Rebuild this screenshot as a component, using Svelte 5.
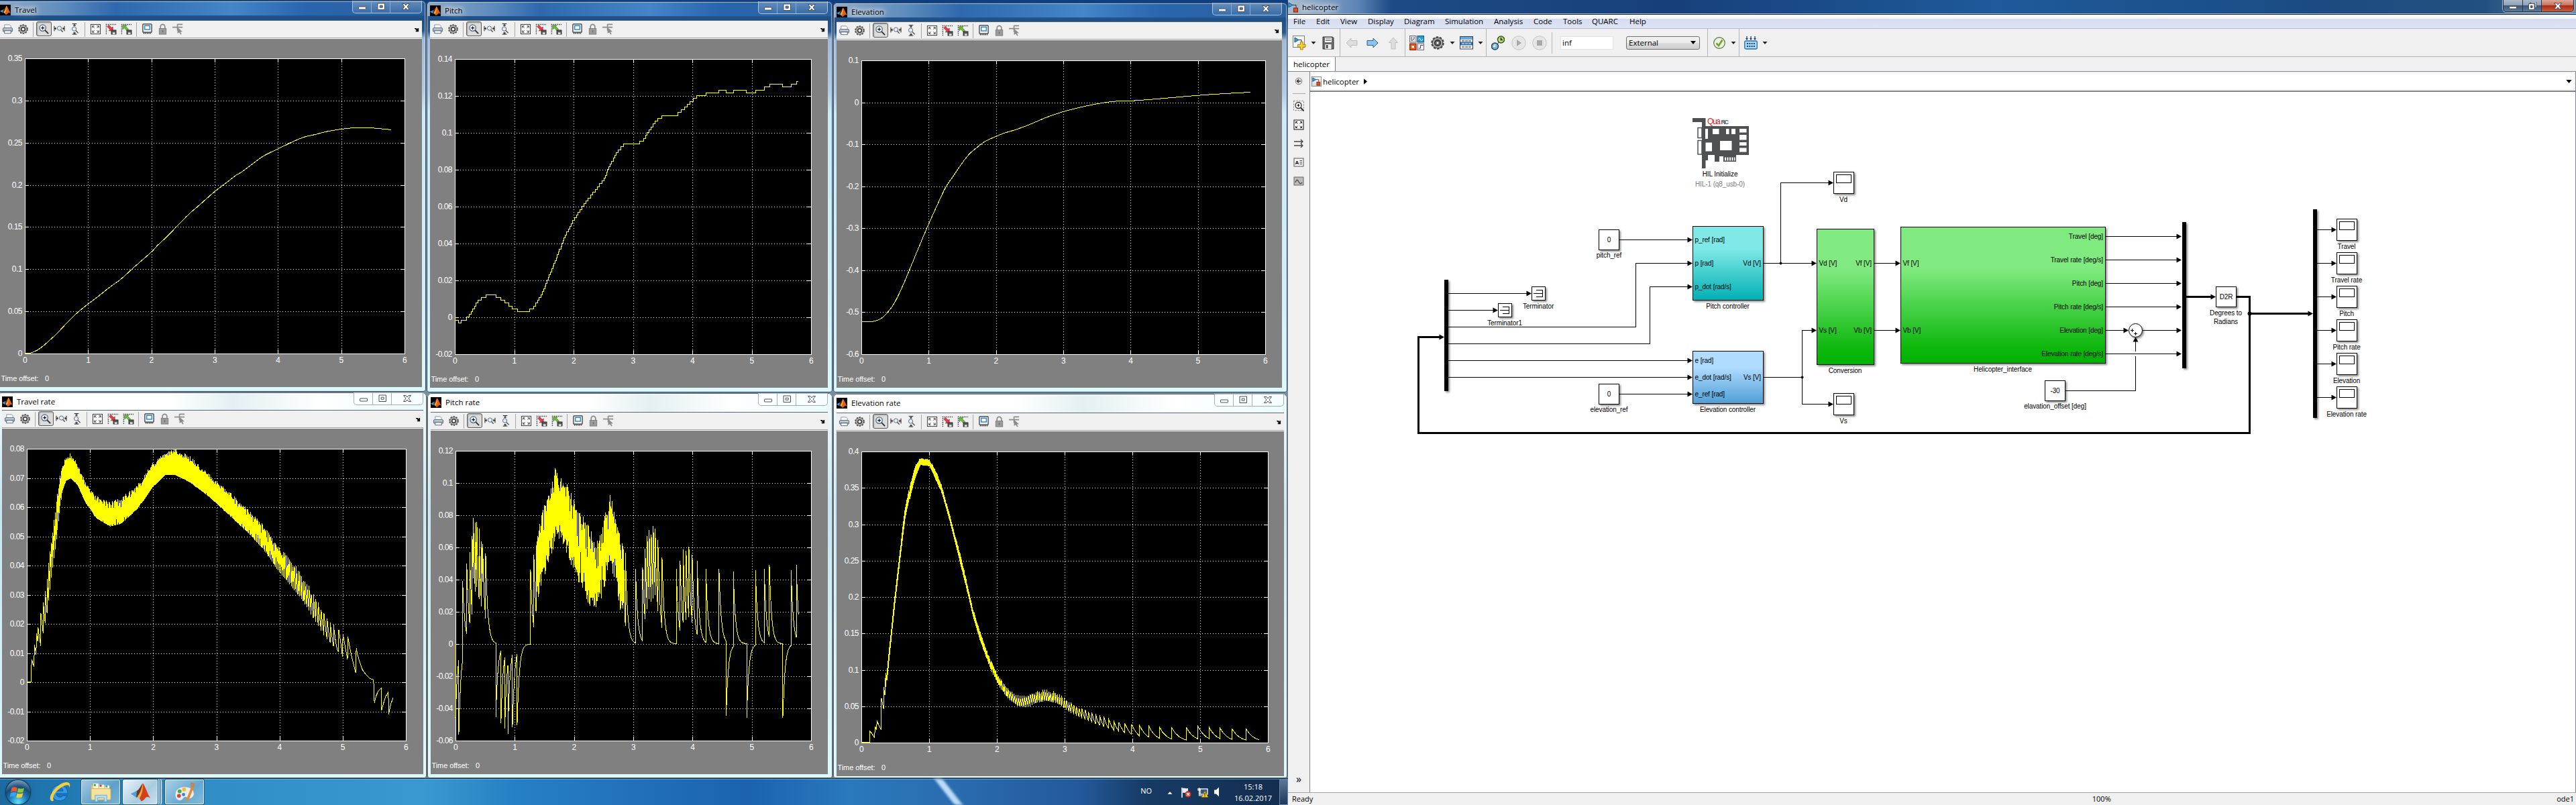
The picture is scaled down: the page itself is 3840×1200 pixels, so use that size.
<script>
  // ---------- helpers ----------
  function rng(seed) {
    let s = seed;
    return () => {
      s = (s * 16807) % 2147483647;
      return s / 2147483647;
    };
  }
  function lerpAt(knots, x, k) {
    if (x <= knots[0][0]) return knots[0][k];
    for (let i = 1; i < knots.length; i++) {
      if (x <= knots[i][0]) {
        const a = knots[i - 1];
        const b = knots[i];
        return a[k] + ((b[k] - a[k]) * (x - a[0])) / (b[0] - a[0]);
      }
    }
    return knots[knots.length - 1][k];
  }
  function catmull(pts) {
    const out = [];
    for (let i = 0; i < pts.length - 1; i++) {
      const p0 = pts[Math.max(0, i - 1)];
      const p1 = pts[i];
      const p2 = pts[i + 1];
      const p3 = pts[Math.min(pts.length - 1, i + 2)];
      for (let j = 0; j < 8; j++) {
        const t = j / 8;
        const f = (a, b, c, d) =>
          0.5 * (2 * b + (c - a) * t + (2 * a - 5 * b + 4 * c - d) * t * t + (3 * b - a - 3 * c + d) * t * t * t);
        out.push([f(p0[0], p1[0], p2[0], p3[0]), f(p0[1], p1[1], p2[1], p3[1])]);
      }
    }
    out.push(pts[pts.length - 1]);
    return out;
  }
  // quantised staircase between sample knots
  function stairs(knots, base, step) {
    const out = [];
    let last = null;
    const end = knots[knots.length - 1][0];
    for (let x = knots[0][0]; x <= end; x += 1) {
      const y = base - Math.round((base - lerpAt(knots, x, 1)) / step) * step;
      if (last !== null && y !== last) out.push([x, last]);
      if (y !== last) out.push([x, y]);
      last = y;
    }
    out.push([end, last]);
    return out;
  }
  // sawtooth: the value decays to zero level and jumps back to the upper envelope [x, top, jump]
  function saw(env, zero, tau, minStep, seed) {
    const r = rng(seed);
    const out = [];
    let x = env[0][0];
    const end = env[env.length - 1][0];
    while (x < end) {
      const jit = (r() - 0.5) * 0.22;
      const jump = lerpAt(env, x, 2);
      const hi = lerpAt(env, x, 1) - jit * jump;
      const lo = hi + jump * (1 + jit);
      const ratio = Math.max(0.02, (zero - lo) / (zero - hi));
      const dx = Math.max(minStep, -tau * Math.log(ratio));
      out.push([x, hi]);
      const n = dx > 10 ? 4 : 1;
      for (let i = 1; i <= n; i++) {
        const xx = x + (dx * i) / n;
        out.push([xx, n > 1 ? zero - (zero - hi) * Math.exp((-dx * i) / n / tau) : lo]);
      }
      x += dx;
    }
    return out;
  }
  // isolated pulses [x, peak] decaying towards zero level
  function pulses(list, zero, tau, end, start = zero) {
    const out = [];
    list.forEach(([x, peak], i) => {
      if (i === 0) out.push([x, start]);
      out.push([x, peak]);
      const nx = i + 1 < list.length ? list[i + 1][0] : end;
      const n = Math.max(2, Math.ceil((nx - x) / 4));
      for (let j = 1; j <= n; j++) {
        const d = ((nx - x) * j) / n;
        out.push([x + d, zero + (peak - zero) * Math.exp(-d / tau)]);
      }
    });
    return out;
  }

  // ---------- traces ----------
  const travel = catmull([[90,1378],[110,1376],[135,1365],[155,1350],[180,1327],[210,1297],[250,1252],[285,1216],[319,1187],[355,1158],[400,1120],[440,1089],[490,1041],[552,983],[575,957],[610,922],[650,878],[690,835],[735,793],[783,748],[830,710],[860,685],[885,669],[925,637],[965,607],[1015,581],[1065,555],[1110,535],[1150,525],[1195,513],[1246,504],[1290,499],[1330,498],[1370,500],[1428,506]]);
  const elevation = catmull([[122,1255],[147,1254],[170,1251],[190,1240],[210,1217],[233,1180],[258,1120],[280,1060],[310,975],[346,876],[385,775],[405,728],[430,685],[455,642],[480,604],[505,578],[535,552],[570,533],[600,519],[640,505],[690,483],[740,458],[796,436],[860,417],[920,403],[965,396],[1020,394],[1100,387],[1200,377],[1300,368],[1421,360]]);
  const pitch = stairs([[141,1237],[143,1246],[152,1253],[160,1257],[170,1250],[190,1238],[205,1213],[222,1180],[240,1161],[265,1148],[285,1150],[305,1162],[330,1182],[357,1203],[380,1214],[408,1213],[425,1204],[445,1172],[465,1132],[490,1065],[515,998],[545,918],[574,862],[605,808],[635,768],[655,742],[685,700],[710,640],[735,592],[760,564],[795,563],[825,553],[850,512],[875,474],[900,454],[945,453],[975,428],[1005,395],[1030,375],[1055,374],[1060,364],[1103,364],[1107,354],[1130,354],[1132,364],[1155,364],[1158,354],[1205,354],[1208,364],[1236,364],[1240,354],[1269,353],[1273,343],[1288,343],[1292,333],[1337,333],[1340,343],[1367,343],[1370,333],[1387,333],[1389,320],[1396,320]], 1237, 11.07);

  const travelRate = [
    [99,1113],[114,1113],[117,1029],[125,1056],[127,975],[133,1010],[134,932],[139,962],
    ...saw([[140,900,80],[165,780,85],[200,510,100],[225,325,80],[240,285,80],[258,272,85],[280,300,80],[310,370,75],[350,430,75],[400,450,85],[440,440,85],[500,390,80],[560,305,80],[600,270,75],[640,255,90],[690,280,90],[750,335,80],[800,380,80],[900,470,85],[960,535,85],[1010,605,90],[1100,715,95],[1180,850,100],[1225,905,92]], 1113, 24, 2.5, 77),
    [1237,1002],[1238,920],[1245,965],[1252,1018],[1253,935],[1261,980],[1270,1028],[1271,945],[1283,1010],
    [1300,1078],[1302,986],[1306,1008],[1315,1040],[1325,1068],[1340,1088],[1352,1100],[1365,1104],
    [1366,1130],[1368,1189],[1374,1165],[1382,1147],[1393,1135],[1394,1218],[1402,1190],[1410,1165],[1419,1150],[1420,1233],[1428,1195],[1436,1172]
  ];

  const denseTop = [[440,606,800],[447,535,805],[470,445,730],[495,388,650],[506,340,610],[512,290,590],[517,325,590],[525,350,600],[540,345,615],[560,380,650],[575,432,700],[600,475,760],[630,520,820],[655,590,865],[680,525,810],[700,455,720],[712,418,690],[730,480,740],[750,580,860]];
  function denseBand(seed) {
    const r = rng(seed);
    const out = [];
    for (let x = 440; x < 762; ) {
      out.push([x, lerpAt(denseTop, x, 1) + r() * 45]);
      x += 2.3 + r() * (x > 570 && x < 690 ? 3 : 1.6);
      out.push([x, lerpAt(denseTop, x, 2) - r() * 60]);
    }
    return out;
  }
  const pitchRate = [
    ...pulses([[146,1245],[158,1308]], 971, 8, 172),
    ...pulses([[172,738],[187,672],[198,632],[207,570],[211,504],[218,522],[224,518],[232,545],[241,592],[245,600],[256,635]], 971, 8, 293, 1010),
    ...pulses([[293,1243],[312,1265],[326,1285],[337,1306],[354,1280],[371,1273]], 971, 8, 420),
    ...pulses([[420,695],[432,640]], 971, 8, 440),
    ...denseBand(31),
    ...pulses([[766,633],[803,692],[829,688],[838,618],[846,572],[853,548],[861,565],[868,535],[875,543],[885,585],[900,650],[952,694],[966,662],[977,620],[988,626],[998,612],[1010,640],[1028,662],[1060,692],[1108,694],[1134,1238],[1160,704],[1209,1246],[1241,697],[1273,692],[1292,677],[1341,1246],[1371,699],[1390,677]], 971, 8, 1398, 905)
  ];

  const elevationRate = [
    [120,1336],[147,1336],[148,1295],[155,1303],[164,1318],[166,1278],[171,1290],
    ...saw([[172,1250,40],[183,1200,40],[205,1060,25],[230,800,25],[250,615,25],[265,475,30],[285,365,38],[298,315,38],[315,283,24],[345,287,24],[360,310,34],[385,375,34],[415,490,34],[450,640,38],[490,830,38],[520,940,38],[550,1030,40],[580,1095,42],[610,1140,42],[640,1162,40],[670,1168,38],[700,1150,38],[735,1142,40],[770,1152,40],[800,1177,42],[850,1210,40],[900,1230,42],[950,1250,42],[1000,1265,42],[1050,1275,42],[1100,1281,42],[1160,1286,42],[1230,1277,44],[1280,1280,42],[1350,1284,44],[1410,1285,42],[1420,1290,30]], 1336, 26, 2.3, 911)
  ];

  function fit(pts, box, w, h) {
    const [x0, y0, x1, y1] = box;
    return pts.map(([x, y]) => `${(((x - x0) / (x1 - x0)) * w).toFixed(1)},${(((y - y0) / (y1 - y0)) * h).toFixed(1)}`).join(' ');
  }

  // window frame: x, y, w, h; insets: l, r, t, b; axes: plot box relative to the body
  const scopes = [
    { title: 'Travel', x: -7, y: 1, w: 642, h: 583, l: 7, r: 6, t: 29, b: 7, ax: 37, ay: 29, aw: 566, ah: 440, labels: ['0.35','0.3','0.25','0.2','0.15','0.1','0.05','0'], pts: travel, box: [90,228,1478,1378], active: true },
    { title: 'Pitch', x: 636, y: 2, w: 605, h: 583, l: 5, r: 7, t: 28, b: 7, ax: 37, ay: 30, aw: 531, ah: 440, labels: ['0.14','0.12','0.1','0.08','0.06','0.04','0.02','0','-0.02'], pts: pitch, box: [141,231,1442,1381], active: true },
    { title: 'Elevation', x: 1242, y: 4, w: 677, h: 581, l: 5, r: 8, t: 28, b: 7, ax: 37, ay: 30, aw: 602, ah: 438, labels: ['0.1','0','-0.1','-0.2','-0.3','-0.4','-0.5','-0.6'], pts: elevation, box: [122,236,1470,1381], active: true },
    { title: 'Travel rate', x: -4, y: 585, w: 640, h: 575, l: 7, r: 5, t: 26, b: 6, ax: 37, ay: 30, aw: 565, ah: 435, labels: ['0.08','0.07','0.06','0.05','0.04','0.03','0.02','0.01','0','-0.01','-0.02'], pts: travelRate, box: [99,247,1483,1330] },
    { title: 'Pitch rate', x: 637, y: 586, w: 604, h: 574, l: 5, r: 7, t: 28, b: 6, ax: 37, ay: 30, aw: 530, ah: 432, labels: ['0.12','0.1','0.08','0.06','0.04','0.02','0','-0.02','-0.04','-0.06'], pts: pitchRate, box: [146,255,1444,1330] },
    { title: 'Elevation rate', x: 1242, y: 587, w: 677, h: 573, l: 5, r: 5, t: 28, b: 3, ax: 37, ay: 30, aw: 606, ah: 434, labels: ['0.4','0.35','0.3','0.25','0.2','0.15','0.1','0.05','0'], pts: elevationRate, box: [120,257,1477,1337] }
  ];
  const scopeTools = ['print', 'gear', '|', 'zoom', 'zoomx', 'zoomy', '|', 'fit', 'save', 'restore', '|', 'float', 'lock', 'select'];

  const menus = [['File', 34], ['Edit', 36], ['View', 41], ['Display', 54], ['Diagram', 61], ['Simulation', 73], ['Analysis', 59], ['Code', 44], ['Tools', 43], ['QUARC', 56], ['Help', 30]];

  // [kind, width, gap before]
  const tools = [['new',20,7],['caret',8,7],['disk',18,9],['sep',1,8],['left',18,8],['right',18,13],['up',18,13],['sep',1,8],['lib',22,6],['cog',20,10],['caret',8,8],['table',20,7],['caret',8,7],['sep',1,4],['clocks',20,7],['play',22,10],['stop',22,9],['short',1,7],['field',79,12],['combo',110,19],['sep',1,11],['check',18,8],['caret',8,8],['sep',1,4],['build',20,7],['caret',8,7]];

  // ---------- diagram ----------
  const blocks = [
    { x: 2523.5, y: 337.5, w: 105, h: 110, fill: 'url(#teal)', name: 'Pitch controller', ins: [['p_ref [rad]', 357], ['p [rad]', 392], ['p_dot [rad/s]', 427]], outs: [['Vd [V]', 392]] },
    { x: 2523.5, y: 523.5, w: 105, h: 78, fill: 'url(#sky)', name: 'Elevation controller', ins: [['e [rad]', 537], ['e_dot [rad/s]', 562], ['e_ref [rad]', 587]], outs: [['Vs [V]', 562]] },
    { x: 2708.5, y: 341.5, w: 85, h: 202, fill: 'url(#green)', name: 'Conversion', ins: [['Vd [V]', 392], ['Vs [V]', 492]], outs: [['Vf [V]', 392], ['Vb [V]', 492]] },
    { x: 2833.5, y: 338.5, w: 305, h: 203, fill: 'url(#green)', name: 'Helicopter_interface', ins: [['Vf [V]', 392], ['Vb [V]', 492]], outs: [['Travel [deg]', 352], ['Travel rate [deg/s]', 387], ['Pitch [deg]', 422], ['Pitch rate [deg/s]', 457], ['Elevation [deg]', 492], ['Elevation rate [deg/s]', 527]] }
  ];
  const consts = [
    { x: 2383.5, y: 342.5, v: '0', name: 'pitch_ref' },
    { x: 2383.5, y: 572.5, v: '0', name: 'elevation_ref' },
    { x: 3048.5, y: 567.5, v: '-30', name: 'elavation_offset [deg]' },
    { x: 3303.5, y: 427.5, v: 'D2R', name: '' }
  ];
  const sinks = [
    { x: 2733.5, y: 256.5, name: 'Vd' },
    { x: 2733.5, y: 586.5, name: 'Vs' },
    ...['Travel', 'Travel rate', 'Pitch', 'Pitch rate', 'Elevation', 'Elevation rate'].map((name, i) => ({ x: 3483.5, y: 326.5 + 50 * i, name }))
  ];
  const wires = [
    'M2159 437.5H2276', 'M2159 462.5H2226', 'M2159 487.5H2438.5V392.5H2516', 'M2159 512.5H2459.5V427.5H2516',
    'M2159 537.5H2516', 'M2159 562.5H2516', 'M2414 587.5H2516', 'M2414 357.5H2516',
    'M2629 392.5H2701', 'M2654.5 392.5V272.5H2726', 'M2629 562.5H2686.5', 'M2701 492.5H2686.5V602.5H2726',
    'M2794 392.5H2826', 'M2794 492.5H2826', 'M3139 492.5H3166', 'M3194 492.5H3245', 'M3079 582.5H3183.5V531',
    'M3183.5 524V509', ...[352.5, 387.5, 422.5, 457.5, 527.5].map((y) => `M3139 ${y}H3245`),
    ...[0, 1, 2, 3, 4, 5].map((i) => `M3454 ${342.5 + i * 50}H3476`)
  ];
  const heads = [[2283,437.5],[2233,462.5],[2523,392.5],[2523,427.5],[2523,537.5],[2523,562.5],[2523,587.5],[2523,357.5],[2708,392.5],[2733,272.5],[2708,492.5],[2733,602.5],[2833,392.5],[2833,492.5],[3173,492.5],[3252,492.5],[3252,352.5],[3252,387.5],[3252,422.5],[3252,457.5],[3252,527.5],[2153,502.5],[3303,442.5],[3448,467.5],...[0,1,2,3,4,5].map((i) => [3483, 342.5 + i * 50])];
</script>

{#snippet matlab()}
  <svg class="mlogo" viewBox="0 0 16 16"><path d="M0 9.5 5 7l2.5 2.5L4 12z" fill="#3f9ad0" /><path d="M5 7c2-.5 3-4 4.8-5.4L8 11l-4 1z" fill="#5b2c20" /><path d="M9.8 1.6c2 2.5 3.6 7.500 6.200 11-2-1.400-3.500-1-4.500.400-1 1.300-2 2-3 2C7.500 13 6.500 12 5.500 11.200 8 9 8.500 3 9.800 1.600z" fill="#e2601c" /><path d="M9.800 1.600C8.700 4 8.500 8 5.500 11.200l1.500 2C9.500 10 10 5 9.800 1.600z" fill="#f6b13c" /></svg>
{/snippet}

{#snippet simlogo()}
  <svg class="sim" viewBox="0 0 16 16"><path d="M1 1v7l6-3.500z" fill="#35a3dc" stroke="#14557f" /><path d="M7 4.500h5V9" fill="none" stroke="#333" /><rect x="8.500" y="9" width="6" height="6" fill="#e2501c" stroke="#7d2410" /></svg>
{/snippet}

{#snippet winButtons(active)}
  <div class="wbtns" class:active>
    <span class="wb"><svg viewBox="0 0 14 12"><rect x="1.500" y="6" width="11" height="4" rx=".5" /></svg></span>
    <span class="wb"><svg viewBox="0 0 14 12"><path fill-rule="evenodd" d="M2 1h10.500v9.500H2zM5.200 4.200v3h4v-3z" /></svg></span>
    <span class="wb close"><svg viewBox="0 0 14 12"><path d="M1.500 1.500h3.500L7 4l2-2.500h3.500L9 6l3.500 4.500H9L7 8l-2 2.500H1.500L5 6z" /></svg></span>
  </div>
{/snippet}

{#snippet scopeIcon(k)}
  <svg class="ic" viewBox="0 0 18 18">
    {#if k === 'print'}
      <path d="M4 7V2h8l2 2v3" fill="#f8fafc" stroke="#8794a3" /><rect x="1.500" y="7" width="15" height="6" rx="1.500" fill="#9aa9ba" stroke="#5a6878" /><rect x="2.500" y="8" width="13" height="1.500" fill="#cfd8e2" /><rect x="4" y="11.500" width="10" height="4" fill="#fff" stroke="#5a6878" />
    {:else if k === 'gear'}
      <circle cx="9" cy="9" r="6.800" fill="none" stroke="#555" stroke-width="2" stroke-dasharray="2.600 1.700" /><circle cx="9" cy="9" r="6" fill="#bdbdbd" stroke="#555" /><circle cx="9" cy="9" r="3" fill="#f2f2f2" stroke="#333" stroke-width="1.600" />
    {:else if k === 'zoom'}
      <circle cx="7" cy="7" r="5" fill="#e4eef8" stroke="#5d6570" stroke-width="1.300" /><path d="M10.500 10.500 16 16" stroke="#333" stroke-width="2" /><path d="M4.500 7h5M7 4.500v5" stroke="#111" stroke-width="1.200" />
    {:else if k === 'zoomx'}
      <circle cx="9" cy="7.500" r="3.300" fill="#e4eef8" stroke="#5d6570" /><path d="M11.300 10 14.500 13.500" stroke="#555" stroke-width="1.500" /><path d="M1 4v8M17 4v8M1 8h3M14 8h3M3 6v4M15 6v4" stroke="#111" />
    {:else if k === 'zoomy'}
      <circle cx="8" cy="8.500" r="3.300" fill="#e4eef8" stroke="#5d6570" /><path d="M10.500 11 14.500 15" stroke="#555" stroke-width="1.500" /><path d="M5 .5h7M5 17h7M8.500 1v3.500M8.500 13.500V17M6.500 3h4M6.500 15h4" stroke="#111" />
    {:else if k === 'fit'}
      <rect x="1.500" y="1.500" width="15" height="15" fill="#fff" stroke="#333" /><path d="M4 7V4h3M11 4h3v3M14 11v3h-3M7 14H4v-3M4 4l3 3M14 4l-3 3M14 14l-3-3M4 14l3-3" fill="none" stroke="#333" />
    {:else if k === 'save' || k === 'restore'}
      <path d="M1.500 17V1.500H17" fill="none" stroke="#333" stroke-width="1.500" stroke-dasharray="1.500 1.500" />
      {#if k === 'save'}
        <path d="M3 5l2.500-2.500 4.500 4.500 1.800-1.700v6.200H5.500L7.500 9.500z" fill="#ee3b45" stroke="#8d1a20" stroke-width=".7" />
      {:else}
        <path d="M3 3h6.500L7.800 4.700l4.500 4.500L10 11.500 5.500 7 3 9.300z" fill="#6cc038" stroke="#2f6a14" stroke-width=".7" />
      {/if}
      <rect x="9.500" y="10.500" width="7.500" height="6.500" fill="#555" stroke="#222" stroke-width=".8" /><rect x="11.500" y="14" width="4" height="3" fill="#ddd" />
    {:else if k === 'float'}
      <rect x="2" y="1" width="14" height="13" rx="1" fill="#f2f2f2" stroke="#333" stroke-width="1.300" /><rect x="5" y="3.500" width="8" height="6" fill="#fff" stroke="#1c7fd0" stroke-width="1.400" /><path d="M3 15.500h12" stroke="#333" stroke-width="2" stroke-dasharray="1.500 1.200" />
    {:else if k === 'lock'}
      <path d="M5.500 8V5a3.500 3.500 0 0 1 7 0v3" fill="none" stroke="#8a8a8a" stroke-width="1.800" /><rect x="3.500" y="8" width="11" height="9" fill="#9c9c9c" stroke="#7d7d7d" /><rect x="8.300" y="11" width="1.500" height="3" fill="#666" />
    {:else}
      <path d="M0 6h8M8 1v10M8 1.500h8M8 6h8" stroke="#8c8c8c" stroke-width="1.700" fill="none" /><path d="M8 6l8 7-3.500.3 2 3.500-1.700.8-2-3.500L8 16z" fill="#8c8c8c" />
    {/if}
  </svg>
{/snippet}

{#snippet toolIcon(k)}
  {#if k === 'new'}
    <svg viewBox="0 0 20 22"><rect x=".5" y=".5" width="17" height="17" fill="#f4f6f8" stroke="#77808a" /><path d="M3 3v7l6-3.500z" fill="#35a3dc" stroke="#14557f" /><path d="M9 6.500h4V10" fill="none" stroke="#333" /><path d="M12 10h4v4h4v4h-4v4h-4v-4H8v-4h4z" transform="scale(.95)" fill="#f7cf3c" stroke="#a57a0c" /></svg>
  {:else if k === 'caret'}
    <svg viewBox="0 0 8 22"><path d="M.5 9h7L4 13z" fill="#222" /></svg>
  {:else if k === 'disk'}
    <svg viewBox="0 0 18 22"><path d="M1 2h14.500L17 3.500V20H1z" fill="#6b6b6b" stroke="#333" /><rect x="4" y="3" width="10" height="7" fill="#fff" /><path d="M5 5h8M5 7.500h8" stroke="#555" /><rect x="4.500" y="13" width="9" height="7" fill="#eee" /><rect x="6" y="14" width="2.500" height="5" fill="#444" /></svg>
  {:else if k === 'left'}
    <svg viewBox="0 0 18 22"><path d="M1 11 8 4v3.500h9v7H8V18z" fill="#ddd" stroke="#bdbdbd" /></svg>
  {:else if k === 'right'}
    <svg viewBox="0 0 18 22"><path d="M17 11 10 4v3.500H1v7h9V18z" fill="#8fc4ee" stroke="#2d5f8a" /></svg>
  {:else if k === 'up'}
    <svg viewBox="0 0 18 22"><path d="M9 3 2.500 10.500h3.500V20h6v-9.500h3.500z" fill="#ddd" stroke="#bdbdbd" /></svg>
  {:else if k === 'lib'}
    <svg viewBox="0 0 22 22"><rect x=".5" y=".5" width="9.500" height="9.500" fill="#dfe3e6" stroke="#667" /><path d="M3 2v5M7 2v3L3 8" stroke="#556" fill="none" /><rect x="12" y=".5" width="9.500" height="9.500" fill="#2797d4" stroke="#125b88" /><path d="M13.500 6c1-3 2-3 3 0s2.500 2 3.500-1" stroke="#e8f6ff" fill="none" /><rect x=".5" y="12" width="9.500" height="9.500" fill="#e2501c" stroke="#86280c" /><rect x="3.500" y="15" width="3.500" height="3.500" fill="#fff" /><rect x="12" y="12" width="9.500" height="9.500" fill="#f0f2f4" stroke="#667" /><path d="M13.500 19h3v-4.500h4" stroke="#445" fill="none" /></svg>
  {:else if k === 'cog'}
    <svg viewBox="0 0 20 22"><circle cx="10" cy="11" r="8.500" fill="none" stroke="#444" stroke-width="2.500" stroke-dasharray="3.500 1.840" /><circle cx="10" cy="11" r="7.800" fill="#a8a8a8" stroke="#444" /><circle cx="10" cy="11" r="4.300" fill="#888" stroke="#222" stroke-width="1.400" /><circle cx="10" cy="11" r="2.300" fill="#f4f4f4" stroke="#333" /></svg>
  {:else if k === 'table'}
    <svg viewBox="0 0 20 22"><rect x=".5" y="1.500" width="19" height="18.500" fill="#fff" stroke="#2a4058" /><rect x="1" y="2" width="18" height="4" fill="#6fa8d8" /><rect x="1" y="9.500" width="18" height="5" fill="#2f6ea8" /><path d="M3 8h14M3 17h14" stroke="#223" stroke-dasharray="4 1" /><path d="M3 12h14" stroke="#fff" stroke-dasharray="4 1" /></svg>
  {:else if k === 'clocks'}
    <svg viewBox="0 0 20 22"><path d="M9 13 12 9" stroke="#333" /><circle cx="5.500" cy="16" r="5" fill="#7ab6e6" stroke="#27435e" stroke-width="1.500" /><path d="M5.500 13v3H3" stroke="#fff" stroke-width="1.500" fill="none" /><circle cx="14.500" cy="6" r="5" fill="#b9dc70" stroke="#35541b" stroke-width="1.500" /><path d="M14.500 3v3.500H17" stroke="#111" stroke-width="1.500" fill="none" /></svg>
  {:else if k === 'play' || k === 'stop'}
    <svg viewBox="0 0 22 22"><circle cx="11" cy="11" r="10.300" fill="#e6e6e6" stroke="#c6c6c6" />{#if k === 'play'}<path d="M8 6v10l7-5z" fill="#a9a9a9" />{:else}<rect x="7" y="7" width="8" height="8" fill="#a9a9a9" />{/if}</svg>
  {:else if k === 'check'}
    <svg viewBox="0 0 18 22"><circle cx="9" cy="11" r="8.300" fill="#eef0ea" stroke="#6d8a4a" stroke-width="1.400" /><path d="M4.500 11.500 8 15l5.500-8.500" fill="none" stroke="#6ea52c" stroke-width="2.600" /></svg>
  {:else if k === 'build'}
    <svg viewBox="0 0 20 22"><path d="M4 1v5M10 1v5M16 1v5" stroke="#1f4468" stroke-width="1.300" /><path d="M2 4h4L4 7zM8 4h4l-2 3zM14 4h4l-2 3z" fill="#1f4468" /><rect x=".7" y="8" width="18.600" height="12" rx="2" fill="#a9d8f8" stroke="#2c6ea6" stroke-width="1.300" /><path d="M4 12h12M4 16h12" stroke="#1f4468" stroke-width="2" stroke-dasharray="2 1.300" /></svg>
  {/if}
{/snippet}

<div class="desktop">
  {#each scopes as s}
    {@const bw = s.w - s.l - s.r}
    {@const n = s.labels.length - 1}
    <section class="win" class:active={s.active} style:left="{s.x}px" style:top="{s.y}px" style:width="{s.w}px" style:height="{s.h}px" style:padding="0 {s.r}px {s.b}px {s.l}px">
      <header class="title" style:height="{s.t}px">
        <span class="appicon">{@render matlab()}</span>
        <span class="name">{s.title}</span>
        {@render winButtons(s.active)}
      </header>
      <div class="bar">
        {#each scopeTools as t}
          {#if t === '|'}<i class="vsep"></i>{:else}<span class="tb" class:pressed={t === 'zoom'}>{@render scopeIcon(t)}</span>{/if}
        {/each}
        <svg class="dock" viewBox="0 0 8 8"><path d="M0 1h3l2 2V1h2v6H2V5h2L0 2z" fill="#000" /></svg>
      </div>
      <svg class="plot" width={bw} height={s.h - s.t - s.b - 28}>
        <g transform="translate({s.ax} {s.ay})" shape-rendering="crispEdges">
          <rect width={s.aw} height={s.ah} fill="#000" />
          {#each [1, 2, 3, 4, 5] as i}
            {@const x = Math.round((s.aw * i) / 6) + 0.5}
            <path d="M{x} 0V{s.ah}" class="grid" />
            <path d="M{x} 0v6M{x} {s.ah}v-6" class="tick" />
          {/each}
          {#each s.labels as _, i}
            {@const y = Math.round((s.ah * i) / n) + 0.5}
            {#if i > 0 && i < n}
              <path d="M0 {y}H{s.aw}" class="grid" />
              <path d="M0 {y}h6M{s.aw} {y}h-6" class="tick" />
            {/if}
          {/each}
          <rect x=".5" y=".5" width={s.aw} height={s.ah} class="frame" />
          <polyline points={fit(s.pts, s.box, s.aw, s.ah)} class="trace" />
        </g>
        <g transform="translate({s.ax} {s.ay})" class="lab">
          {#each s.labels as l, i}
            <text x="-4" y={(s.ah * i) / n + 4} text-anchor="end">{l}</text>
          {/each}
          {#each [0, 1, 2, 3, 4, 5, 6] as i}
            <text x={(s.aw * i) / 6} y={s.ah + 14} text-anchor="middle">{i}</text>
          {/each}
        </g>
        <g class="off"><text x="1.500" y={s.h - s.t - s.b - 37} textLength="56">Time offset:</text><text x="67" y={s.h - s.t - s.b - 37}>0</text></g>
      </svg>
    </section>
  {/each}

  <footer class="taskbar">
    <span class="orb"><svg viewBox="0 0 20 20"><path d="M2 4.500C5 3 7 3.500 9 4.500L8 9.500C6 8.500 4 8.500 1 9.800z" fill="#f0562a" /><path d="M10.200 5C12.500 6 14.500 6 17.500 4.500l-1.200 5c-2.500 1.300-5 1.300-7.200.3z" fill="#8cc63c" /><path d="M.8 11c3-1.300 5-1.300 7-.3l-1.200 5C4.500 14.700 2.500 14.700-.3 16z" fill="#3ea0e8" /><path d="M8.900 11.200c2.300 1 4.600 1 7.200-.3l-1.200 5c-2.500 1.300-5 1.300-7.200.3z" fill="#fccb2e" /></svg></span>
    <span class="ie"><svg viewBox="0 0 34 34"><path d="M17 6a12 12 0 1 0 11 16h-6a5.500 5.500 0 0 1-10-3h17A12 12 0 0 0 17 6zm-5 9a5 5 0 0 1 10 0z" fill="#2f9ae6" stroke="#0d5aa8" /><path d="M5 30C-2 26 8 11 18 5c7-4 13-4 14 0 .5 2 0 4-1 6 1-4-1-6-6-4C16 10 4 22 8 29c-1 1.500-2 1.500-3 1z" fill="#f7cd3e" /></svg></span>
    <span class="task"><svg viewBox="0 0 34 32"><path d="M2 6h9l2 3h17v19H2z" fill="#e8c35a" /><path d="M5 3h8v8H5z" fill="#fffbe8" /><path d="M14 5h8v8h-8zM23 6h7v8h-7z" fill="#fff3c0" /><path d="M6 4h3v3H6z" fill="#3a3" /><path d="M15 5h3v3h-3z" fill="#d33" /><path d="M24 6h3v3h-3z" fill="#39d" /><rect x="2" y="11" width="30" height="17" rx="1.500" fill="#f8e39c" stroke="#d6ae4a" /><path d="M8 31V21h18v10h-4v-6H12v6z" fill="#b6def4" stroke="#6fa9cc" /></svg></span>
    <span class="task stack"><svg viewBox="0 0 34 34"><path d="M1 20 11 15l6 5-7 6z" fill="#4da3d8" /><path d="M11 15c4-1 6-9 10-12l-4 21-7 2z" fill="#6d3528" /><path d="M21 3c4 5 7 17 12 24-4-3-7-2-9 1-2 3-4 4-6 4-2-5-4-6-6-8C17 20 18 6 21 3z" fill="#d2421a" /><path d="M21 3c-2 5-2 13-9 21l3 4c5-7 6-17 6-25z" fill="#f3a83c" /></svg></span>
    <span class="task"><svg viewBox="0 0 34 32"><path d="M16 8C8 8 2 13 2 20s5 10 9 9 3-5 7-5 4 4 8 2 6-5 5-9c-1-6-7-9-15-9z" fill="#e4edf4" stroke="#93a9ba" /><circle cx="9" cy="15" r="3" fill="#4aa84a" /><circle cx="16" cy="12" r="3" fill="#f0c030" /><circle cx="8" cy="22" r="3" fill="#d6453c" /><circle cx="15" cy="20" r="2.500" fill="#3a7fd0" /><path d="M29 3l3 3-9 22-5 4 2-6z" fill="#e88a2c" /><path d="M26 1l7 2-2 7-5-2z" fill="#b98a5c" /></svg></span>
    <div class="tray">
      <span class="lang">NO</span>
      <svg class="t1" viewBox="0 0 8 16"><path d="M0 11h8L4 7z" fill="#fff" /></svg>
      <svg class="t2" viewBox="0 0 16 16"><path d="M2 1v15" stroke="#fff" stroke-width="1.500" /><path d="M3 2c3-1 4 1 8 0v7c-4 1-5-1-8 0z" fill="#e8eef4" /><circle cx="11" cy="11" r="4.500" fill="#e0392e" stroke="#a01a14" stroke-width=".7" /><path d="M9 9l4 4M13 9l-4 4" stroke="#fff" stroke-width="1.500" /></svg>
      <svg class="t3" viewBox="0 0 16 16"><rect x="4" y="3" width="11" height="8" fill="#35597f" stroke="#fff" stroke-width="1.300" /><path d="M2.500 1v12h5M1 2v3h3V2" fill="none" stroke="#fff" stroke-width="1.200" /><path d="M11 6l5 9.500H6z" fill="#f9cf2c" stroke="#8d6c00" stroke-width=".7" /><path d="M11 9v3.500M11 13.300v1.200" stroke="#222" stroke-width="1.200" /></svg>
      <svg class="t4" viewBox="0 0 8 16"><path d="M0 5h3l4-4v14l-4-4H0z" fill="#fff" /></svg>
      <div class="clock"><span>15:18</span><span>16.02.2017</span></div>
      <i class="peek"></i>
    </div>
  </footer>

  <section class="sl">
    <header class="sltitle">
      {@render simlogo()}<span class="name">helicopter</span>
      <div class="slbtns">
        <span class="wb"><svg viewBox="0 0 14 12"><rect x="1.500" y="6.500" width="11" height="3.500" /></svg></span>
        <span class="wb"><svg viewBox="0 0 14 12"><path d="M4 0h9v8.500h-2V2H4z" /><path fill-rule="evenodd" d="M1.500 2.500h8.500v9H1.500zM4.500 5.500v3h2.500v-3z" /></svg></span>
        <span class="wb red"><svg viewBox="0 0 14 12"><path d="M1.500 1.500h3.500L7 4l2-2.500h3.500L9 6l3.500 4.500H9L7 8l-2 2.500H1.500L5 6z" /></svg></span>
      </div>
    </header>
    <nav class="menu">{#each menus as [m, w]}<span style:width="{w}px">{m}</span>{/each}</nav>
    <div class="toolbar">
      {#each tools as [k, w, gap]}
        <span class="tool {k}" style:width="{w}px" style:margin-left="{gap}px">
          {#if k === 'field'}inf{:else if k === 'combo'}External<svg class="dd" viewBox="0 0 8 5"><path d="M0 0h8L4 5z" /></svg>{:else}{@render toolIcon(k)}{/if}
        </span>
      {/each}
    </div>
    <div class="tabs"><span class="tab">helicopter</span></div>
    <div class="main">
      <aside class="palette">
        <svg viewBox="0 0 16 16" class="p1"><circle cx="8" cy="8" r="4.800" fill="#e4e4e4" stroke="#777" /><path d="M11 8H6M8 5.500 5.500 8 8 10.500" fill="none" stroke="#333" stroke-width="1.500" /></svg>
        <hr />
        <svg viewBox="0 0 16 16"><rect x=".5" y=".5" width="15" height="14" fill="none" stroke="#777" stroke-dasharray="2 2" /><circle cx="7.500" cy="7" r="4.500" fill="#fff" stroke="#333" stroke-width="1.300" /><path d="M11 10.500l4.500 5" stroke="#333" stroke-width="2" /><path d="M5.500 7h4M7.500 5v4" stroke="#000" stroke-width="1.200" /></svg>
        <svg viewBox="0 0 16 16"><rect x="1" y="1" width="14" height="14" fill="#f6f6f6" stroke="#444" stroke-width="1.300" /><path d="M3.500 6V3.500H6M10 3.500h2.500V6M12.500 10v2.500H10M6 12.500H3.500V10M3.500 3.500l3 3M12.500 3.500l-3 3M12.500 12.500l-3-3M3.500 12.500l3-3" fill="none" stroke="#333" /></svg>
        <svg viewBox="0 0 16 16"><path d="M1 5h12M1 11h12M11 2l3 3-3 3M11 8l3 3-3 3" fill="none" stroke="#444" stroke-width="1.300" /></svg>
        <svg viewBox="0 0 16 16"><rect x="1" y="2" width="14" height="12" fill="#f6f6f6" stroke="#555" /><path d="M9.500 5.500H13M9.500 8H13M9.500 10.500H13" stroke="#444" /><text x="2.500" y="11" class="pa">A</text></svg>
        <svg viewBox="0 0 16 16"><rect x="1" y="2" width="14" height="12" fill="#bcbcbc" stroke="#666" /><path d="M3 10c2-5 3-5 5-1s3 3 5 1" fill="none" stroke="#444" stroke-width="1.200" /></svg>
        <span class="more">»</span>
      </aside>
      <div class="stage">
        <div class="crumb"><span class="cicon">{@render simlogo()}</span><span>helicopter</span><svg class="ca" viewBox="0 0 6 10"><path d="M0 0l6 5-6 5z" /></svg><svg class="cd" viewBox="0 0 10 6"><path d="M0 0h10L5 6z" /></svg></div>
        <svg class="canvas" viewBox="1953 138 1886 1043" width="1886" height="1043">
          <defs>
            <linearGradient id="teal" x1="0" y1="0" x2="0" y2="1"><stop offset=".3" stop-color="#80e9e8" /><stop offset="1" stop-color="#00b0b3" /></linearGradient>
            <linearGradient id="sky" x1="0" y1="0" x2="0" y2="1"><stop offset=".3" stop-color="#b0dcff" /><stop offset="1" stop-color="#509fd6" /></linearGradient>
            <linearGradient id="green" x1="0" y1="0" x2="0" y2="1"><stop offset=".3" stop-color="#80ea80" /><stop offset=".88" stop-color="#0eb80e" /><stop offset="1" stop-color="#00b200" /></linearGradient>
          </defs>

          <g transform="translate(2523 176)" fill="#4f5052">
            <path d="M0 0h19.500v75H14V6H0z" /><path d="M14 12h70v43H65v10H46v-8h-6v8h-7V55H23v8h-4V55h-5z" />
            <path d="M8 14.500h6v15H8zM8 33.500h6v20.500H8z" fill="#fff" stroke="#4f5052" stroke-width="1.500" />
            <g fill="#fff"><path d="M19 16h4v15h-4zM30 16h9.500v8H30zM50 16h4.500v8H50zM58 16h6v8h-6zM70 16h10.500v5.500H70zM70 25h10.500v7.500H70zM70 36h10.500v5H70zM70 44.500h10.500v6H70zM19.500 36.500H29v13h-9.500zM41 34h17.500v14H41zM48 58.500h2v5h-2zM51.500 58.500h2v5h-2zM55 58.500h2v5h-2zM58.500 58.500h2v5h-2zM62 58.500h1.500v5H62z" /></g>
          </g>
          <text x="2545" y="185" class="qu" textLength="20">Qua</text><text x="2565.500" y="185" class="rc" textLength="11.500">RC</text>
          <text x="2564" y="262.500" class="lbl">HIL Initialize</text>
          <text x="2564" y="278" class="lbl grey">HIL-1 (q8_usb-0)</text>

          <g class="shadow">
            <rect x="2153" y="417" width="6" height="166" /><rect x="3253" y="331" width="6" height="218" /><rect x="3448" y="312" width="6" height="311" />
          </g>
          <g class="wire">{#each wires as d}<path {d} />{/each}</g>
          <g class="thick"><path d="M3259 442.500H3297M3334 442.500H3353.500V645.500H2114.500V502.500H2147M3353.500 467.500H3442" /></g>
          {#each heads as [x, y]}<path d="M{x} {y}l-7.500-4v8z" />{/each}
          <path d="M3183.500 502.500l-4 7h8z" />
          <circle cx="2654.500" cy="392.500" r="2" /><circle cx="2686.500" cy="562.500" r="2" /><circle cx="3353.500" cy="467.500" r="3" />

          {#each blocks as b}
            <rect class="blk" x={b.x} y={b.y} width={b.w} height={b.h} fill={b.fill} />
            {#each b.ins as [t, y]}<text class="port" x={b.x + 3} y={y + 3.500}>{t}</text>{/each}
            {#each b.outs as [t, y]}<text class="port end" x={b.x + b.w - 3.500} y={y + 3.500}>{t}</text>{/each}
            <text class="lbl" x={b.x + b.w / 2 - 0.500} y={b.y + b.h + 12}>{b.name}</text>
          {/each}
          {#each consts as c}
            <rect class="blk" x={c.x} y={c.y} width="30" height="30" fill="#fff" />
            <text class="lbl" x={c.x + 15} y={c.y + 18}>{c.v}</text>
            {#if c.name}<text class="lbl" x={c.x + 15} y={c.y + 41.500}>{c.name}</text>{/if}
          {/each}
          <text class="lbl" x="3318" y="469.500">Degrees to</text><text class="lbl" x="3318" y="482.500">Radians</text>
          {#each sinks as k}
            <rect class="blk" x={k.x} y={k.y} width="30" height="32" fill="#fff" />
            <rect class="inner" x={k.x + 4} y={k.y + 4} width="22" height="12" />
            <text class="lbl" x={k.x + 14.500} y={k.y + 44}>{k.name}</text>
          {/each}
          {#each [[2283.5, 427.5, 'Terminator'], [2233.5, 452.5, 'Terminator1']] as [x, y, name]}
            <rect class="blk" {x} {y} width="20" height="20" fill="#fff" />
            <path class="wire" d="M{x + 2} {y + 10}h14M{x + 6} {y + 5}h10v10h-10" />
            <text class="lbl" x={x + 9.500} y={y + 32}>{name}</text>
          {/each}
          <circle class="sum" cx="3183.500" cy="492.500" r="10" />
          <path class="wire" d="M3176 492.500h5M3178.500 490v5M3181 497.500h5M3183.500 495v5" />
        </svg>
      </div>
    </div>
    <footer class="status"><span>Ready</span><span class="pct">100%</span><span class="ode">ode1</span></footer>
  </section>
</div>

<style>
  :global(body) { margin: 0; overflow: hidden; }
  .desktop { position: relative; width: 3840px; height: 1200px; overflow: hidden; background: linear-gradient(#0e3f82 0, #123f7a 8px, #8aa4bd 60px, #5f7380 100%); font-family: "Open Sans", "Noto Sans", sans-serif; font-size: 11.5px; color: #000; }
  .desktop svg { display: block; flex: none; }

  /* scope windows */
  .win { position: absolute; box-sizing: border-box; display: flex; flex-direction: column; border-radius: 6px 6px 4px 4px; background: linear-gradient(90deg, #ffffff 0, #ffffff 40%, #e3f0f2 55%, #fff 75%, #eafafd 100%) top / 100% 29px no-repeat, linear-gradient(#f4fbfd, #c6e6f2 30%, #d2eef6 60%, #dcfafc); box-shadow: inset 0 0 0 1px #53606b, inset 0 0 0 2px rgba(255, 255, 255, .75); }
  .win.active { background: linear-gradient(90deg, #8fa9c6 0, #5e8cbd 16%, #2f68ad 28%, #4585c8 55%, #2a65ad 72%, #2a5f9c 100%) top / 100% 22px no-repeat, linear-gradient(#2d64a8 0, #1e4f86 28px, #27578c 45px, #a3bbd8 56px, #b4cbe4 135px, #cdebf6 165px, #d2eff6 75%, #dcfafc); box-shadow: inset 0 0 0 1px #3c4c60, inset 0 0 0 2px rgba(200, 230, 250, .6); }
  .title { display: flex; align-items: flex-start; flex: none; gap: 6px; }
  .appicon { width: 16px; height: 16px; background: #000; margin: 6px 0 0 0; }
  .mlogo { width: 16px; height: 16px; }
  .title .name { flex: 1; margin-top: 5px; line-height: 18px; text-shadow: 0 0 6px #fff, 0 0 10px #fff, 0 0 14px #fff; }
  .wbtns { display: flex; height: 19px; box-sizing: border-box; border: 1px solid #a6aeb4; border-top: 0; border-radius: 0 0 5px 5px; background: rgba(255, 255, 255, .55); }
  .wbtns.active { border-color: #a8c6e6; background: linear-gradient(rgba(255, 255, 255, .28), rgba(255, 255, 255, .08)); }
  .wb { width: 27px; display: flex; align-items: center; justify-content: center; border-right: 1px solid #a6aeb4; }
  .wbtns.active .wb { border-color: #86aad2; }
  .wb.close { width: 46px; border: 0; }
  .wb svg { width: 14px; height: 12px; fill: #fff; stroke: #4a5058; stroke-width: 1; }
  .bar { flex: none; display: flex; align-items: center; height: 28px; box-sizing: border-box; background: #f0f0f0; border-top: 1px solid #5c6a76; border-bottom: 1px solid #fff; box-shadow: inset 0 -1px 0 #a0a0a0; padding-right: 4px; }
  .tb { width: 23px; height: 22px; display: flex; align-items: center; justify-content: center; box-sizing: border-box; margin-bottom: 2px; }
  .tb.pressed { border: 1px solid #5c5c5c; border-radius: 3px; background: #dcdcdc; box-shadow: inset 1px 1px 2px rgba(0, 0, 0, .3); }
  .ic { width: 17px; height: 17px; }
  .vsep { width: 1px; height: 22px; background: #a8a8a8; margin: 0 6px 0 3px; }
  .vsep + .tb { margin-left: -2px; }
  .dock { width: 7px; height: 7px; margin-left: auto; }
  .plot { background: #808080; }
  .grid { stroke: #fff; stroke-dasharray: 1 3; fill: none; }
  .tick, .frame { stroke: #fff; fill: none; }
  .trace { fill: none; stroke: #ff0; stroke-width: 1; }
  .lab text { font: 12px "Liberation Sans", Arial, sans-serif; fill: #fff; letter-spacing: -.5px; }
  .off text { font: 11px "Liberation Sans", Arial, sans-serif; fill: #fff; }

  /* taskbar */
  .taskbar { position: absolute; left: 0; top: 1160px; width: 1920px; height: 40px; box-sizing: border-box; border-top: 1px solid #16324c; display: flex; align-items: center; background: linear-gradient(90deg, #1d6a9f 0, #1e74ac 3%, #2f8cc4 14%, #3a98d0 33%, #2680c4 40%, #1c62ae 58%, #2a78bd 66%, #2a6cb0 74%, #23599a 84%, #173a63 89%, #122d4e 100%); box-shadow: inset 0 1px 0 rgba(160, 215, 245, .5); }
  .taskbar::before { content: ""; position: absolute; left: 1408px; top: 0; width: 12px; height: 39px; transform: skewX(38deg); background: #bcdcf6; filter: blur(2px); }
  .orb { width: 36px; height: 36px; margin-left: 9px; border-radius: 50%; display: flex; align-items: center; justify-content: center; background: radial-gradient(circle at 50% 90%, #5ee0ff 0, #1d7cb8 35%, #184b7c 60%, #a9c6da 100%); box-shadow: 0 0 2px 1px #123; }
  .orb svg { width: 24px; height: 24px; }
  .ie { width: 34px; margin: 0 15px 0 27px; }
  .ie svg { width: 34px; height: 34px; }
  .task { width: 58px; height: 37px; box-sizing: border-box; margin-right: 4px; display: flex; align-items: center; justify-content: center; border: 1px solid #d4ecfa; border-radius: 2px; background: linear-gradient(135deg, rgba(255, 255, 255, .6), rgba(255, 255, 255, .25) 60%, rgba(255, 255, 255, .4)); box-shadow: 0 0 0 1px #25597d; }
  .task svg { width: 33px; height: 31px; }
  .task.stack { width: 52px; margin-right: 11px; background: linear-gradient(135deg, #eaf4fa, #a9cbe0 60%, #cbe0ee); box-shadow: 0 0 0 1px #25597d, 3px 0 0 0 #bcdcf0, 4px 0 0 0 #25597d, 7px 0 0 0 #9cc8e4, 8px 0 0 0 #25597d; }
  .tray { margin-left: auto; height: 39px; display: flex; align-items: center; color: #fff; font-size: 11px; }
  .lang { margin: 0 23px 4px 0; }
  .t1 { width: 8px; height: 14px; margin-right: 12px; }
  .t2, .t3 { width: 16px; height: 18px; margin-right: 9px; }
  .t4 { width: 8px; height: 17px; }
  .clock { display: flex; flex-direction: column; align-items: center; line-height: 17px; margin: 0 11px 0 22px; width: 56px; }
  .peek { width: 13px; height: 39px; box-sizing: border-box; border: 1px solid #6c86a4; background: linear-gradient(#5a7796, #1c3a5e); }

  /* model editor */
  .sl { position: absolute; left: 1920px; top: 0; width: 1920px; height: 1200px; display: flex; flex-direction: column; background: #f0f0f0; }
  .sltitle { height: 22px; box-sizing: border-box; flex: none; display: flex; align-items: flex-start; background: linear-gradient(90deg, #a7bccf 0, #5b83b5 5.5%, #1d4a84 8%, #17407a 30%, #1f5a9a 55%, #1b4b82 80%, #22507f 93%, #6e8ba6 100%); border-bottom: 1px solid #14243c; box-shadow: inset 0 -1px 0 #a9bed6; }
  .sim { width: 16px; height: 16px; }
  .sltitle > .sim { margin: 3px 5px 0 0; }
  .sltitle .name { line-height: 21px; text-shadow: 0 0 6px #fff, 0 0 10px #fff, 0 0 14px #fff; }
  .slbtns { display: flex; height: 18px; margin-left: auto; margin-right: 3px; box-sizing: border-box; border: 1px solid #1d2e42; border-top: 0; border-radius: 0 0 5px 5px; overflow: hidden; background: linear-gradient(#a9b9c9 0, #8ea2b6 45%, #3d5877 50%, #5c7b98); box-shadow: 0 0 0 1px #a6bdd2; }
  .slbtns .wb { border-color: #24364b; }
  .slbtns .wb:first-child { width: 28px; }
  .slbtns .wb.red { width: 47px; border: 0; background: linear-gradient(#dea79b 0, #c9735f 45%, #a92c16 50%, #cf5a34); }
  .menu { height: 21px; box-sizing: border-box; flex: none; display: flex; padding-left: 8px; line-height: 20px; background: linear-gradient(#fff 0, #f2f5fb 30%, #d5dcee 31%, #dfe5f5 100%); border-bottom: 1px solid #b3b8c9; }
  .menu span { white-space: nowrap; }
  .toolbar { height: 42px; box-sizing: border-box; flex: none; display: flex; align-items: center; border-bottom: 1px solid #b4b4b4; }
  .tool { flex: none; display: flex; align-items: center; box-sizing: border-box; }
  .tool.sep { height: 41px; background: #b4b4b4; }
  .tool.short { height: 32px; background: #b8b8b8; }
  .tool > svg { width: 100%; height: 22px; }
  .tool.field { height: 20px; background: #fff; border: 1px solid #dfe3e8; padding-left: 2px; }
  .tool.combo { height: 20px; border: 1px solid #707070; border-radius: 3px; padding: 0 5px 0 3px; justify-content: space-between; background: linear-gradient(#f2f2f2 0, #ebebeb 48%, #ddd 50%, #cfcfcf); }
  .tool.combo .dd { width: 8px; height: 5px; }
  .tabs { height: 22px; box-sizing: border-box; flex: none; border-bottom: 1px solid #80838f; display: flex; }
  .tab { width: 71px; height: 21px; box-sizing: border-box; background: #fff; border-right: 1px solid #80838f; text-align: center; line-height: 21px; }
  .main { flex: 1; min-height: 0; display: flex; }
  .palette { width: 32px; flex: none; display: flex; flex-direction: column; align-items: center; gap: 12px; position: relative; }
  .palette svg { width: 16px; height: 16px; }
  .palette .p1 { margin-top: 6px; }
  .palette hr { width: 19px; height: 1px; border: 0; background: #aaa; margin: -2px 0; flex: none; }
  .palette hr + svg { margin-top: 0; }
  .pa { font: bold 8px "Liberation Sans", sans-serif; }
  .more { margin-top: auto; margin-bottom: 9px; font-size: 16px; }
  .stage { flex: 1; display: flex; flex-direction: column; background: #fff; border-left: 1px solid #80838f; border-right: 1px solid #80838f; }
  .crumb { height: 30px; box-sizing: border-box; flex: none; display: flex; align-items: center; border-bottom: 2px solid #80838f; padding: 0 5px 0 2px; box-shadow: inset 0 0 0 1px #fff, inset 0 0 0 2px #efefef; }
  .cicon { width: 15px; height: 15px; box-sizing: border-box; border: 1px solid #8a8f96; background: linear-gradient(#fff, #d8d8d8); margin-right: 2px; }
  .cicon :global(svg) { width: 13px; height: 13px; }
  .ca { width: 5px; height: 9px; margin-left: 7px; }
  .cd { width: 9px; height: 5px; margin-left: auto; }
  .canvas { margin-top: 1px; }
  .status { height: 19px; flex: none; display: flex; align-items: center; justify-content: space-between; padding: 0 3px 2px 6px; font-size: 11px; border-top: 1px solid #a5a5a5; box-sizing: border-box; }
  .status .pct { margin-left: 497px; }

  .lbl, .port { font: 10px "Liberation Sans", Arial, sans-serif; letter-spacing: -.1px; fill: #000; }
  .lbl { text-anchor: middle; }
  .end { text-anchor: end; }
  .grey { fill: #7a7a7a; }
  .qu { font: 12px "Liberation Sans", Arial, sans-serif; fill: #e0202a; }
  .rc { font: bold 9px "Liberation Sans", Arial, sans-serif; fill: #4f5052; }
  .blk, .sum { stroke: #000; stroke-width: 1; filter: drop-shadow(2px 2px 1.5px rgba(0, 0, 0, .45)); }
  .sum { fill: #fff; }
  .shadow { filter: drop-shadow(2px 2px 1.5px rgba(0, 0, 0, .45)); }
  .inner { fill: none; stroke: #000; }
  .wire { fill: none; stroke: #000; stroke-width: 1; shape-rendering: crispEdges; }
  .thick path { fill: none; stroke: #000; stroke-width: 3; shape-rendering: crispEdges; }
</style>
